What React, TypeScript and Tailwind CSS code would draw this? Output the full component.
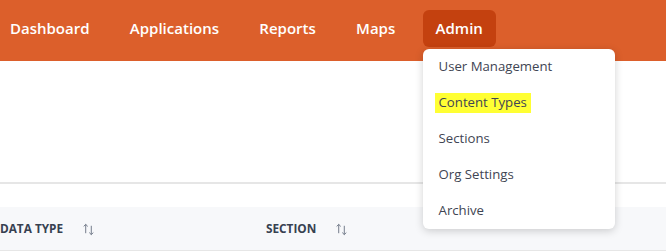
const navItems = ["Dashboard", "Applications", "Reports", "Maps"];
const adminItems = ["User Management", "Content Types", "Sections", "Org Settings", "Archive"];

const SortIcon = () => (
  <svg viewBox="0 0 14 14" className="h-[13px] w-[13px] text-gray-500" fill="none" stroke="currentColor" strokeWidth="1">
    <path d="M4 11 V1.5 M1.8 3.7 L4 1.5 L6.2 3.7" />
    <path d="M10 3 V12.5 M7.8 10.3 L10 12.5 L12.2 10.3" />
  </svg>
);

export default function App() {
  return (
    <div className="relative h-[251px] w-[666px] overflow-hidden bg-white font-['Open_Sans',sans-serif]">
      {/* Top nav */}
      <header className="flex h-[61px] items-start bg-[#dc5f2b] pt-[10px]">
        <nav className="ml-[-3px] flex items-center gap-[14.3px]">
          {navItems.map((item) => (
            <a key={item} className="rounded-md px-[13px] py-[7px] text-[15px] leading-[23px] font-semibold text-white">
              {item}
            </a>
          ))}
          <div className="relative">
            <a className="block rounded-md bg-[#c4410f] px-[13px] py-[7px] text-[15px] leading-[23px] font-semibold text-white">
              Admin
            </a>
            {/* Admin dropdown */}
            <div className="absolute left-0 top-[39px] z-10 w-[192px] rounded-md bg-white shadow-[0_2px_8px_rgba(0,0,0,0.18)]">
              {adminItems.map((item) => (
                <div key={item} className="flex h-[36px] items-center px-[12px] text-[13.2px] text-[#3f4553]">
                  <span className={item === "Content Types" ? "bg-[#ffff33] px-[4px]" : "px-[4px]"}>{item}</span>
                </div>
              ))}
            </div>
          </div>
        </nav>
      </header>

      {/* Body */}
      <div className="h-[123px] border-b-2 border-[#e6e6e6]" />
      <div className="mt-[23px] flex h-[44px] items-center border-b border-[#e6e6e6] bg-[#f7f8fa] pt-[1px]">
        <div className="flex w-[266px] items-center gap-[19px]">
          <span className="text-[11.8px] font-bold uppercase text-[#374151]">Data Type</span>
          <SortIcon />
        </div>
        <div className="flex items-center gap-[19px]">
          <span className="text-[11.8px] font-bold uppercase text-[#374151]">Section</span>
          <SortIcon />
        </div>
      </div>
    </div>
  );
}
